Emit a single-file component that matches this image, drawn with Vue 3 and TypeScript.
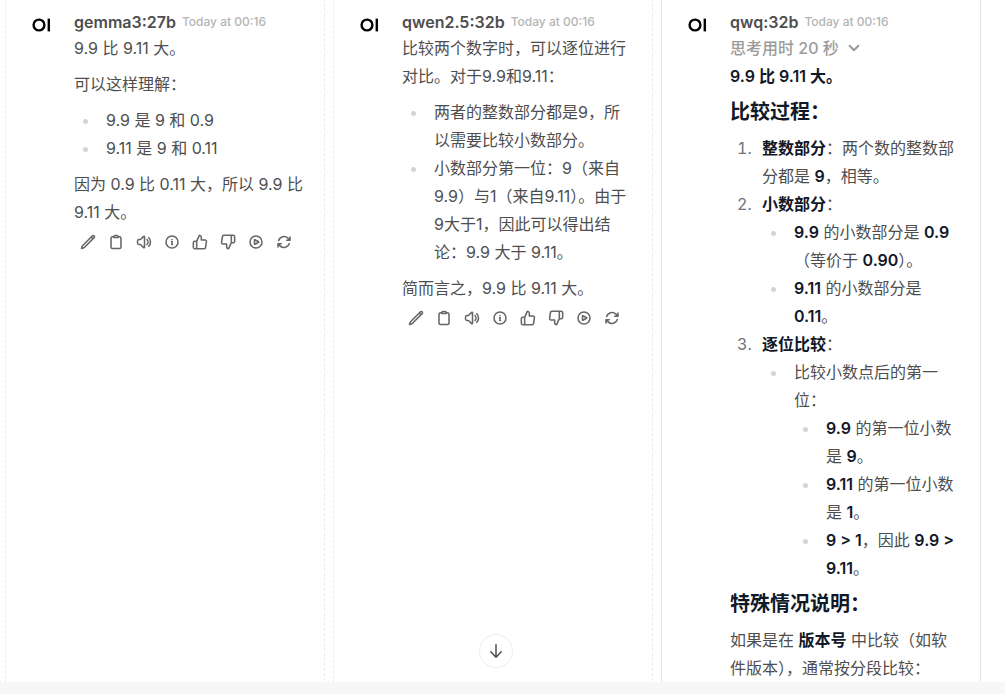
<script setup lang="ts">
import { defineComponent, h } from 'vue'

interface Action {
  label: string
  width: number
  paths: string[]
}

const actions: Action[] = [
  {
    label: '编辑',
    width: 2.3,
    paths: [
      'M16.862 4.487l1.687-1.688a1.875 1.875 0 112.652 2.652L6.832 19.82a4.5 4.5 0 01-1.897 1.13l-2.685.8.8-2.685a4.5 4.5 0 011.13-1.897L16.863 4.487zm0 0L19.5 7.125',
    ],
  },
  {
    label: '复制',
    width: 2.3,
    paths: [
      'M15.666 3.888A2.25 2.25 0 0013.5 2.25h-3c-1.03 0-1.9.693-2.166 1.638m7.332 0c.055.194.084.4.084.612v0a.75.75 0 01-.75.75H9a.75.75 0 01-.75-.75v0c0-.212.03-.418.084-.612m7.332 0c.646.049 1.288.11 1.927.184 1.1.128 1.907 1.077 1.907 2.185V19.5a2.25 2.25 0 01-2.25 2.25H6.75A2.25 2.25 0 014.5 19.5V6.257c0-1.108.806-2.057 1.907-2.185a48.208 48.208 0 011.927-.184',
    ],
  },
  {
    label: '朗读',
    width: 2.3,
    paths: [
      'M19.114 5.636a9 9 0 010 12.728M16.463 8.288a5.25 5.25 0 010 7.424M6.75 8.25l4.72-4.72a.75.75 0 011.28.53v15.88a.75.75 0 01-1.28.53l-4.72-4.72H4.51c-.88 0-1.704-.507-1.938-1.354A9.01 9.01 0 012.25 12c0-.83.112-1.633.322-2.396C2.806 8.756 3.63 8.25 4.51 8.25H6.75z',
    ],
  },
  {
    label: '信息',
    width: 2.3,
    paths: [
      'M11.25 11.25l.041-.02a.75.75 0 011.063.852l-.708 2.836a.75.75 0 001.063.853l.041-.021M21 12a9 9 0 11-18 0 9 9 0 0118 0zm-9-3.75h.008v.008H12V8.25z',
    ],
  },
  {
    label: '赞',
    width: 2.3,
    paths: [
      'M14 9V5a3 3 0 0 0-3-3l-4 9v11h11.28a2 2 0 0 0 2-1.7l1.38-9a2 2 0 0 0-2-2.3zM7 22H4a2 2 0 0 1-2-2v-7a2 2 0 0 1 2-2h3',
    ],
  },
  {
    label: '踩',
    width: 2.3,
    paths: [
      'M10 15v4a3 3 0 0 0 3 3l4-9V2H5.72a2 2 0 0 0-2 1.7l-1.38 9a2 2 0 0 0 2 2.3zm7-13h2.67A2.31 2.31 0 0 1 22 4v7a2.31 2.31 0 0 1-2.33 2H17',
    ],
  },
  {
    label: '继续',
    width: 2.3,
    paths: [
      'M21 12a9 9 0 1 1-18 0 9 9 0 0 1 18 0Z',
      'M15.91 11.672a.375.375 0 0 1 0 .656l-5.603 3.113a.375.375 0 0 1-.557-.328V8.887c0-.286.307-.466.557-.327l5.603 3.112Z',
    ],
  },
  {
    label: '重新生成',
    width: 2.3,
    paths: [
      'M16.023 9.348h4.992v-.001M2.985 19.644v-4.992m0 0h4.992m-4.993 0l3.181 3.183a8.25 8.25 0 0013.803-3.7M4.031 9.865a8.25 8.25 0 0113.803-3.7l3.181 3.182m0-4.991v4.99',
    ],
  },
]

const Logo = defineComponent({
  render: () =>
    h('svg', { viewBox: '0 0 32 32', width: 32, height: 32, 'aria-hidden': 'true' }, [
      h('circle', { cx: 13, cy: 16, r: 5.4, fill: 'none', stroke: '#000', 'stroke-width': 2.4 }),
      h('rect', { x: 21.6, y: 9.6, width: 2.4, height: 12.8, fill: '#000' }),
    ]),
})

const ActionBar = defineComponent({
  render: () =>
    h(
      'div',
      { class: 'actions' },
      actions.map((a) =>
        h('button', { type: 'button', class: 'action', 'aria-label': a.label }, [
          h(
            'svg',
            {
              viewBox: '0 0 24 24',
              width: 16,
              height: 16,
              fill: 'none',
              stroke: 'currentColor',
              'stroke-width': a.width,
              'stroke-linecap': 'round',
              'stroke-linejoin': 'round',
            },
            a.paths.map((d) => h('path', { d })),
          ),
        ]),
      ),
    ),
})
</script>

<template>
  <div class="page">
    <main class="chat">
      <div class="responses">
        <article class="card">
          <Logo class="logo" />
          <div class="body">
            <header class="head"><span class="name">gemma3:27b</span><time class="time">Today at 00:16</time></header>
            <div class="prose">
              <p>9.9 比 9.11 大。</p>
              <p>可以这样理解：</p>
              <ul>
                <li>9.9 是 9 和 0.9</li>
                <li>9.11 是 9 和 0.11</li>
              </ul>
              <p>因为 0.9 比 0.11 大，所以 9.9 比 9.11 大。</p>
            </div>
            <ActionBar />
          </div>
        </article>

        <article class="card">
          <Logo class="logo" />
          <div class="body">
            <header class="head"><span class="name">qwen2.5:32b</span><time class="time">Today at 00:16</time></header>
            <div class="prose">
              <p>比较两个数字时，可以逐位进行对比。对于9.9和9.11：</p>
              <ul>
                <li>两者的整数部分都是9，所以需要比较小数部分。</li>
                <li>小数部分第一位：9（来自9.9）与1（来自9.11）。由于9大于1，因此可以得出结论：9.9 大于 9.11。</li>
              </ul>
              <p>简而言之，9.9 比 9.11 大。</p>
            </div>
            <ActionBar />
          </div>
        </article>

        <article class="card selected">
          <Logo class="logo" />
          <div class="body">
            <header class="head"><span class="name">qwq:32b</span><time class="time">Today at 00:16</time></header>
            <button type="button" class="thinking">
              思考用时 20 秒
              <svg viewBox="0 0 24 24" width="14" height="14" fill="none" stroke="currentColor" stroke-width="3.5" stroke-linecap="round" stroke-linejoin="round">
                <path d="m19.5 8.25-7.5 7.5-7.5-7.5" />
              </svg>
            </button>
            <div class="prose">
              <p><strong>9.9 比 9.11 大。</strong></p>
              <h3>比较过程：</h3>
              <ol>
                <li><strong>整数部分</strong>：两个数的整数部分都是 <strong>9</strong>，相等。</li>
                <li>
                  <strong>小数部分</strong>：
                  <ul>
                    <li><strong>9.9</strong> 的小数部分是 <strong>0.9</strong>（等价于 <strong>0.90</strong>）。</li>
                    <li><strong>9.11</strong> 的小数部分是 <strong>0.11</strong>。</li>
                  </ul>
                </li>
                <li>
                  <strong>逐位比较</strong>：
                  <ul>
                    <li>
                      比较小数点后的第一位：
                      <ul>
                        <li><strong>9.9</strong> 的第一位小数是 <strong>9</strong>。</li>
                        <li><strong>9.11</strong> 的第一位小数是 <strong>1</strong>。</li>
                        <li><strong>9 &gt; 1</strong>，因此 <strong>9.9 &gt; 9.11</strong>。</li>
                      </ul>
                    </li>
                  </ul>
                </li>
              </ol>
              <h3>特殊情况说明：</h3>
              <p>如果是在 <strong>版本号</strong> 中比较（如软件版本），通常按分段比较：</p>
            </div>
          </div>
        </article>
      </div>

      <div class="jump">
        <button type="button" class="jump-button" aria-label="滚动到底部">
          <svg viewBox="0 0 20 20" width="20" height="20" fill="currentColor">
            <path d="M10 3a.75.75 0 01.75.75v10.638l3.96-4.158a.75.75 0 111.08 1.04l-5.25 5.5a.75.75 0 01-1.08 0l-5.25-5.5a.75.75 0 111.08-1.04l3.96 4.158V3.75A.75.75 0 0110 3z" />
          </svg>
        </button>
      </div>
    </main>
    <footer class="track"></footer>
  </div>
</template>

<style>
body {
  margin: 0;
  background: #fff;
}
</style>

<style scoped>
.page {
  display: flex;
  flex-direction: column;
  height: 100vh;
  overflow: hidden;
  font-family: Inter, "Noto Sans CJK SC", sans-serif;
  font-size: 16px;
  line-height: 28px;
  color: #4e4e4e;
}
.chat {
  position: relative;
  flex: 1;
  min-height: 0;
  display: flex;
  overflow: hidden;
}
.responses {
  flex: 1;
  display: grid;
  grid-template-columns: repeat(3, minmax(0, 1fr));
  gap: 8px;
  margin-top: -8px;
  padding: 0 24px 0 5px;
}
.card {
  box-sizing: border-box;
  display: flex;
  gap: 16px;
  align-items: flex-start;
  padding: 16px 20px;
  border: 1px dashed #ececec;
  border-radius: 8px;
}
.card.selected {
  border-style: solid;
  border-color: #e3e3e3;
}
.logo {
  flex: none;
}
.body {
  flex: 1;
  min-width: 0;
}
.head {
  display: flex;
  align-items: center;
  gap: 6px;
  height: 25px;
  white-space: nowrap;
}
.name {
  font-weight: 600;
}
.time {
  font-size: 12px;
  font-weight: 500;
  color: #b4b4b4;
}
.thinking {
  display: flex;
  align-items: center;
  gap: 8px;
  padding: 0;
  border: 0;
  background: none;
  font: inherit;
  font-weight: 500;
  color: #9b9b9b;
}
.prose p,
.prose ul,
.prose ol {
  margin: 8px 0;
}
.prose li ul {
  margin: 0;
}
.prose > :first-child {
  margin-top: 0;
}
.prose > :last-child {
  margin-bottom: 0;
}
.prose h3 {
  margin: 8px 0;
  font-size: 20px;
  font-weight: 600;
  line-height: 28px;
  color: #111827;
}
.prose strong {
  font-weight: 600;
  color: #111827;
}
.prose ul,
.prose ol {
  padding-left: 26px;
}
.prose ul {
  list-style: disc;
}
.prose li {
  padding-left: 6px;
}
.prose ul > li::marker {
  color: #d1d5db;
}
.prose ol > li::marker {
  color: #6b7280;
}
.body :deep(.action) {
  display: flex;
  padding: 6px;
  border: 0;
  background: none;
  color: #666;
}
.body :deep(.actions),
.actions {
  display: flex;
  margin-top: 2px;
}
.jump {
  position: absolute;
  left: 0;
  right: 13px;
  bottom: 14px;
  display: flex;
  justify-content: center;
}
.jump-button {
  display: flex;
  padding: 6px;
  border: 1px solid #ececec;
  border-radius: 50%;
  background: #fff;
  color: #4e4e4e;
}
.track {
  flex: none;
  height: 12px;
  background: #f7f7f7;
}
</style>
